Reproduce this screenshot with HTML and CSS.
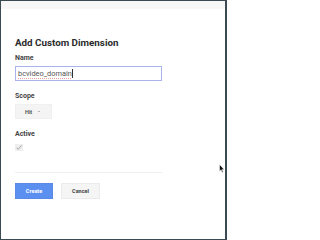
FILE: index.html
```html
<!DOCTYPE html>
<html>
<head>
<meta charset="utf-8">
<link rel="stylesheet" href="styles.css">
</head>
<body>
<div class="frame">
  <div class="band"></div>
  <div class="content">
    <h1 class="title">Add Custom Dimension</h1>
    <div class="label label-name">Name</div>
    <div class="input"><span class="typed">bcvideo_domain</span><span class="caret"></span></div>
    <div class="label label-gap">Scope</div>
    <div class="select"><span class="select-text">Hit</span><span class="select-arrow"></span></div>
    <div class="label label-gap">Active</div>
    <div class="checkbox">
      <svg viewBox="0 0 8 7" width="8" height="7"><path d="M1.6 3.8 L3.2 5.3 L6.6 1.4" fill="none" stroke="#9a9a9a" stroke-width="0.9"/></svg>
    </div>
    <div class="divider"></div>
    <div class="actions">
      <div class="btn btn-primary">Create</div>
      <div class="btn btn-default">Cancel</div>
    </div>
  </div>
  <svg class="pointer" viewBox="0 0 6 9" width="6" height="9"><path d="M0.5 0.5 L0.5 7.2 L2 5.8 L3.2 8.4 L4.2 8 L3.1 5.4 L5.2 5.4 Z" fill="#111" stroke="#fff" stroke-width="0.5"/></svg>
</div>
</body>
</html>
```
FILE: styles.css
```css
html, body {
  margin: 0;
  padding: 0;
  background: #ffffff;
}
.frame {
  position: relative;
  width: 227px;
  height: 240px;
  box-sizing: border-box;
  border-style: solid;
  border-color: #3a4952;
  border-width: 1px 2px 1px 1px;
  background: #ffffff;
  overflow: hidden;
  font-family: Roboto, "Liberation Sans", Arial, sans-serif;
  color: #333333;
}
.band {
  height: 8px;
  background: #f7f7f7;
}
.content {
  padding: 28px 0 0 14px;
  display: flex;
  flex-direction: column;
  align-items: flex-start;
}
.title {
  margin: 0;
  font-size: 9.8px;
  line-height: 12px;
  font-weight: 700;
  color: #2b2b2b;
}
.label {
  font-size: 7px;
  line-height: 9px;
  font-weight: 700;
  color: #444444;
}
.label-name {
  margin-top: 5px;
}
.label-gap {
  margin-top: 11px;
}
.input {
  margin-top: 3px;
  width: 147px;
  height: 15px;
  box-sizing: border-box;
  border: 1px solid #aab3ea;
  display: flex;
  align-items: center;
  padding-left: 2px;
  font-size: 7.4px;
  color: #555555;
}
.typed {
  text-decoration: underline dotted #e8a0a0;
  text-decoration-thickness: 0.6px;
  text-underline-offset: 1.5px;
}
.caret {
  width: 1px;
  height: 9px;
  background: #333333;
}
.select {
  margin-top: 3px;
  width: 37px;
  height: 15px;
  box-sizing: border-box;
  background: #f4f4f4;
  border: 1px solid #f0f0f0;
  display: flex;
  align-items: center;
  padding-left: 9px;
  gap: 6px;
  font-size: 5.5px;
  font-weight: 700;
  color: #555555;
}
.select-arrow {
  width: 0;
  height: 0;
  border-left: 1.5px solid transparent;
  border-right: 1.5px solid transparent;
  border-top: 1.5px solid #777777;
}
.checkbox {
  margin-top: 5px;
  width: 8px;
  height: 7px;
  background: #efefef;
  display: flex;
}
.divider {
  margin-top: 21px;
  width: 147px;
  height: 1px;
  background: #f0f0f0;
}
.actions {
  margin-top: 10px;
  display: flex;
  gap: 8px;
}
.btn {
  height: 16px;
  box-sizing: border-box;
  display: flex;
  align-items: center;
  justify-content: center;
  font-size: 5.5px;
  font-weight: 700;
}
.btn-primary {
  width: 38px;
  background: #5b8ff0;
  border: 1px solid #5a8ae6;
  color: #ffffff;
}
.btn-default {
  width: 39px;
  background: #f5f5f5;
  border: 1px solid #ebebeb;
  color: #444444;
}
.pointer {
  position: absolute;
  left: 218px;
  top: 163px;
}
```
